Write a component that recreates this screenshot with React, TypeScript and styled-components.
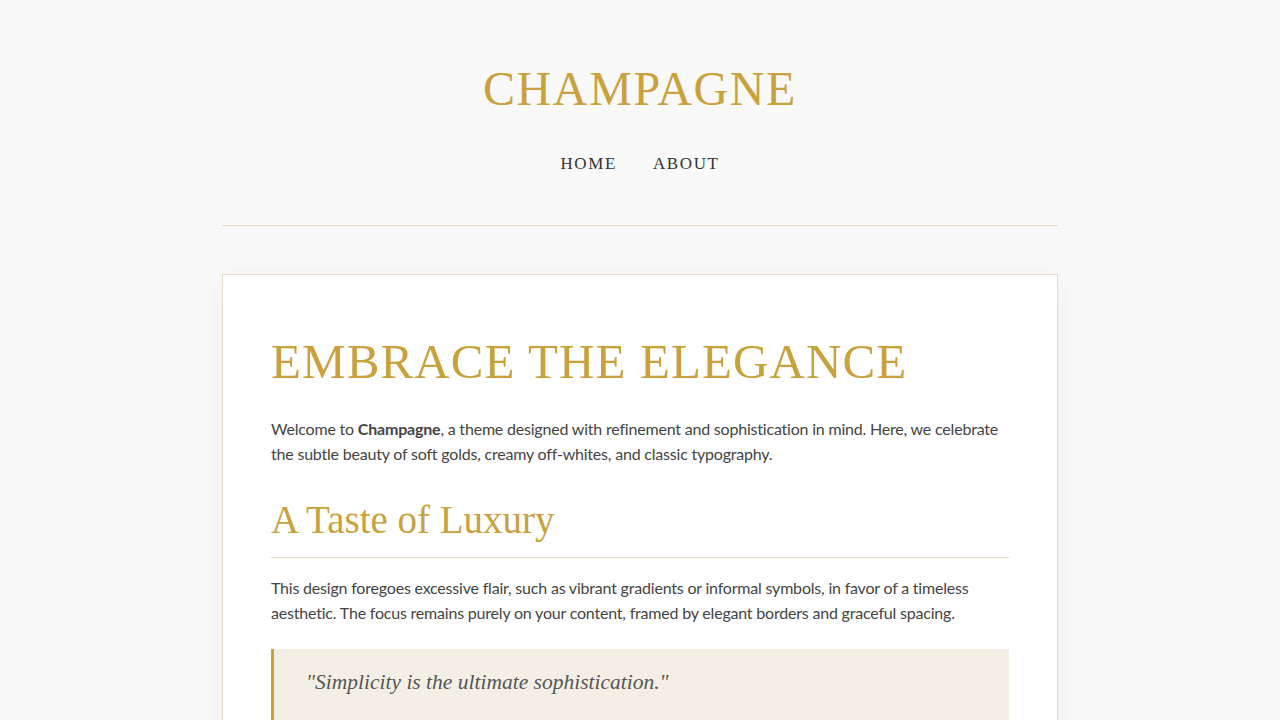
import React from "react";
import styled, { createGlobalStyle } from "styled-components";

const GOLD = "#c9a13d";
const LINE = "#e6dcc6";
const SERIF = `"Liberation Serif", "DejaVu Serif", serif`;
const SANS = `Lato, "Open Sans", sans-serif`;

const Global = createGlobalStyle`
  html, body { margin: 0; padding: 0; background: #f9f9f9; }
  body { font-family: ${SANS}; color: #444; }
`;

const Container = styled.div`
  width: 836px;
  margin: 0 auto;
`;

const Header = styled.header`
  padding: 59px 0 49px;
  border-bottom: 1px solid ${LINE};
  display: flex;
  flex-direction: column;
  align-items: center;
  gap: 33px;
`;

const SiteTitle = styled.h1`
  margin: 0;
  font-family: ${SERIF};
  font-weight: 400;
  font-size: 48px;
  line-height: 60px;
  letter-spacing: 1.6px;
  color: ${GOLD};
`;

const Nav = styled.nav`
  display: flex;
  gap: 36px;
`;

const NavLink = styled.a`
  font-family: ${SERIF};
  font-size: 17px;
  line-height: 24px;
  letter-spacing: 1.6px;
  color: #333;
  text-decoration: none;
`;

const Card = styled.main`
  margin-top: 48px;
  background: #fff;
  border: 1px solid ${LINE};
  box-shadow: 0 4px 24px rgba(0, 0, 0, 0.05);
  padding: 48px;
`;

const Title = styled.h2`
  margin: 0 0 15px;
  font-family: ${SERIF};
  font-weight: 400;
  font-size: 49px;
  line-height: 78px;
  letter-spacing: 1.1px;
  color: ${GOLD};
`;

const Para = styled.p`
  margin: 0;
  font-size: 16px;
  line-height: 25px;
  letter-spacing: -0.2px;
  color: #444;
`;

const Section = styled.h3`
  margin: 30px 0 17px;
  padding-bottom: 13px;
  border-bottom: 1px solid ${LINE};
  font-family: ${SERIF};
  font-weight: 400;
  font-size: 39px;
  line-height: 48px;
  color: ${GOLD};
`;

const Quote = styled.blockquote`
  margin: 24px 0 0;
  padding: 21px 32px 40px;
  background: #f4efe5;
  border-left: 3px solid ${GOLD};
  font-family: ${SERIF};
  font-style: italic;
  font-size: 21.5px;
  line-height: 24px;
  color: #555;
`;

export default function App() {
  return (
    <>
      <Global />
      <Container>
        <Header>
          <SiteTitle>CHAMPAGNE</SiteTitle>
          <Nav>
            <NavLink href="#">HOME</NavLink>
            <NavLink href="#">ABOUT</NavLink>
          </Nav>
        </Header>
        <Card>
          <Title>EMBRACE THE ELEGANCE</Title>
          <Para>
            Welcome to <strong>Champagne</strong>, a theme designed with refinement and
            sophistication in mind. Here, we celebrate the subtle beauty of soft golds,
            creamy off-whites, and classic typography.
          </Para>
          <Section>A Taste of Luxury</Section>
          <Para>
            This design foregoes excessive flair, such as vibrant gradients or informal
            symbols, in favor of a timeless aesthetic. The focus remains purely on your
            content, framed by elegant borders and graceful spacing.
          </Para>
          <Quote>"Simplicity is the ultimate sophistication."</Quote>
        </Card>
      </Container>
    </>
  );
}
